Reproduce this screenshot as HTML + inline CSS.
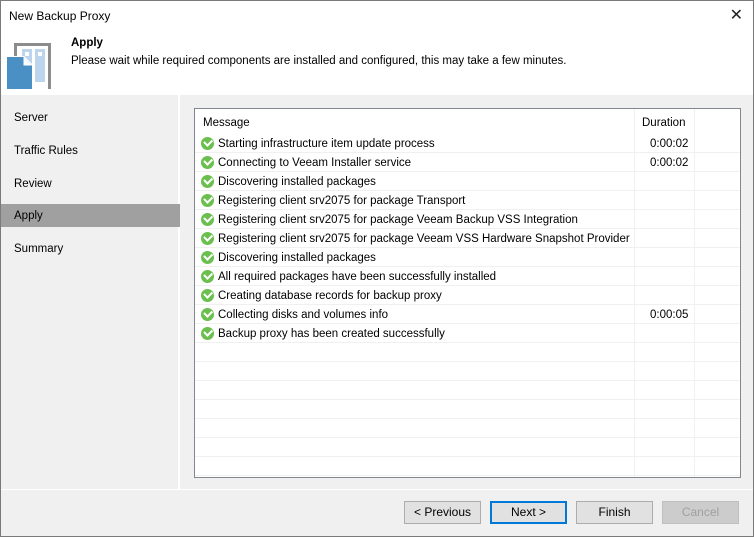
<!DOCTYPE html>
<html><head><style>
*{margin:0;padding:0;box-sizing:border-box}
body{width:754px;height:537px;background:#f0f0f0;font-family:"Liberation Sans",sans-serif;font-size:11.5px;color:#000;position:relative;overflow:hidden}
.win{position:absolute;left:0;top:0;width:754px;height:537px;border:1px solid #7a7a7a}
.title{position:absolute;left:1px;top:1px;width:752px;height:31px;background:#fff}
.title span{position:absolute;left:8px;top:8px;font-size:12px}
.x{position:absolute;right:10px;top:4px;font-size:16px;color:#222}
.head{position:absolute;left:1px;top:32px;width:752px;height:63px;background:#fff}
.nav{position:absolute;left:1px;top:95px;width:179px;height:394px;background:#f0f0f0;border-right:2px solid #fff}
.nav div{position:absolute;left:0;width:179px;height:23px;padding:6px 0 0 13px}
.box{position:absolute;left:194px;top:108px;width:547px;height:370px;background:#fff;border:1px solid #828790}
.row{position:absolute;left:0;width:545px;height:19px;border-bottom:1px solid #f0f0f0}
.row span{position:absolute;left:23px;top:4px;white-space:nowrap}
.row b{font-weight:normal;position:absolute;left:455px;top:4px}
.chk{position:absolute;left:6px;top:3px;width:13px;height:13px;border-radius:50%;background:#6bbf4e}
.chk:after{content:"";position:absolute;left:3px;top:2px;width:6px;height:3.5px;border-left:2px solid #fff;border-bottom:2px solid #fff;transform:rotate(-45deg)}
.vl{position:absolute;top:0;width:1px;height:368px;background:#f0f0f0}
.btn{position:absolute;top:501px;width:77px;height:23px;border:1px solid #adadad;background:#e1e1e1;text-align:center;line-height:21px;font-size:12px}
</style></head><body>
<div class="win"></div>
<div class="title"><span>New Backup Proxy</span><div class="x">✕</div></div>
<div class="head">
<div style="position:absolute;left:70px;top:5px;font-weight:bold">Apply</div>
<div style="position:absolute;left:70px;top:23px">Please wait while required components are installed and configured, this may take a few minutes.</div>
</div>
<svg style="position:absolute;left:0;top:0" width="60" height="95">
<rect x="14" y="43" width="37" height="46" fill="#8c8c8c"/><rect x="17" y="46" width="31" height="43" fill="#fff"/>
<rect x="22" y="49" width="10" height="33" fill="#bcd5ec"/><rect x="35" y="49" width="10" height="33" fill="#bcd5ec"/>
<rect x="25" y="52" width="4" height="4" fill="#fff"/><rect x="38" y="52" width="4" height="4" fill="#fff"/>
<path d="M6 56H24L33 65V90H6Z" fill="#fff"/><path d="M7 57H23L32 66V89H7Z" fill="#4a90c4"/><path d="M23 57V66H32" fill="#fff" stroke="#4a90c4"/>
</svg>
<div class="nav">
<div style="top:11px">Server</div><div style="top:44px">Traffic Rules</div><div style="top:77px">Review</div>
<div style="top:109px;background:#a0a0a0">Apply</div><div style="top:142px">Summary</div>
</div>
<div class="box">
<div class="vl" style="left:439px"></div><div class="vl" style="left:499px"></div>
<div class="row" style="top:0;height:24px;border:none"><span style="left:8px;top:8px">Message</span><b style="left:447px;top:8px">Duration</b></div>
<div class="row" style="top:25px"><i class="chk"></i><span>Starting infrastructure item update process</span><b>0:00:02</b></div>
<div class="row" style="top:44px"><i class="chk"></i><span>Connecting to Veeam Installer service</span><b>0:00:02</b></div>
<div class="row" style="top:63px"><i class="chk"></i><span>Discovering installed packages</span></div>
<div class="row" style="top:82px"><i class="chk"></i><span>Registering client srv2075 for package Transport</span></div>
<div class="row" style="top:101px"><i class="chk"></i><span>Registering client srv2075 for package Veeam Backup VSS Integration</span></div>
<div class="row" style="top:120px"><i class="chk"></i><span>Registering client srv2075 for package Veeam VSS Hardware Snapshot Provider</span></div>
<div class="row" style="top:139px"><i class="chk"></i><span>Discovering installed packages</span></div>
<div class="row" style="top:158px"><i class="chk"></i><span>All required packages have been successfully installed</span></div>
<div class="row" style="top:177px"><i class="chk"></i><span>Creating database records for backup proxy</span></div>
<div class="row" style="top:196px"><i class="chk"></i><span>Collecting disks and volumes info</span><b>0:00:05</b></div>
<div class="row" style="top:215px"><i class="chk"></i><span>Backup proxy has been created successfully</span></div>
<div class="row" style="top:234px"></div><div class="row" style="top:253px"></div><div class="row" style="top:272px"></div>
<div class="row" style="top:291px"></div><div class="row" style="top:310px"></div><div class="row" style="top:329px"></div><div class="row" style="top:348px"></div>
</div>
<div style="position:absolute;left:1px;top:489px;width:752px;height:1px;background:#fff"></div>
<div class="btn" style="left:404px">&lt; Previous</div>
<div class="btn" style="left:490px;border:2px solid #0078d7;line-height:19px">Next &gt;</div>
<div class="btn" style="left:576px">Finish</div>
<div class="btn" style="left:662px;color:#a0a0a0;border-color:#bfbfbf;background:#ccc">Cancel</div>
</body></html>
